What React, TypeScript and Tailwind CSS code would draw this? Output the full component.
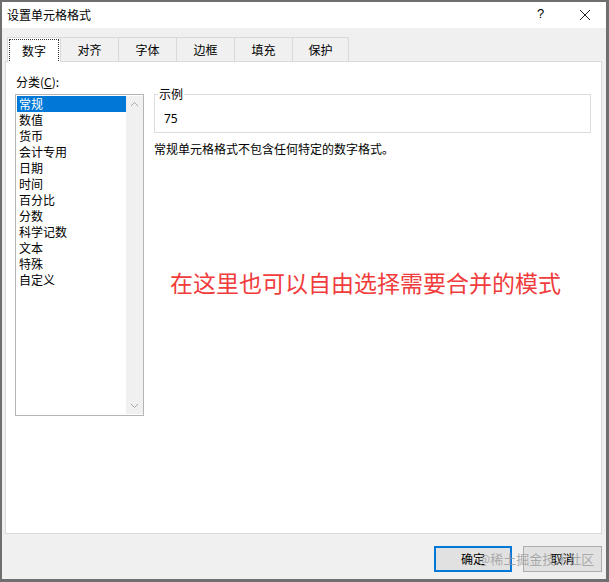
import React from "react";

const items = ["常规", "数值", "货币", "会计专用", "日期", "时间", "百分比", "分数", "科学记数", "文本", "特殊", "自定义"];
const tabs = [
  { t: "对齐", w: "w-[58px]" },
  { t: "字体", w: "w-[58px]" },
  { t: "边框", w: "w-[58px]" },
  { t: "填充", w: "w-[58px]" },
  { t: "保护", w: "w-[56px]" },
];

export default function App() {
  return (
    <div className="w-[609px] h-[582px] bg-[#6f6f6f] pl-[2px] pt-[2px] pr-[3px] pb-[3px] font-['Noto_Sans_CJK_SC','Microsoft_YaHei',sans-serif] text-[12px] text-black">
      <div className="flex flex-col h-full bg-[#f0f0f0]">
        {/* title bar */}
        <div className="h-[26px] bg-white flex items-center pl-[5px] relative shrink-0">
          <span className="leading-[16px]">设置单元格格式</span>
          <span className="absolute left-[535px] top-[4px] text-[13px] leading-[16px] font-['Liberation_Sans',sans-serif]">?</span>
          <svg className="absolute left-[577px] top-[7px]" width="12" height="12" viewBox="0 0 12 12">
            <path d="M1 1 L11 11 M11 1 L1 11" stroke="#222" strokeWidth="1" fill="none" />
          </svg>
        </div>
        {/* tabs */}
        <div className="flex pl-[5px] mt-[9px] h-[24px] shrink-0 relative z-10">
          <div className="w-[54px] h-[25px] bg-white border border-b-0 border-[#d9d9d9] p-[1px]">
            <div className="h-full border border-dotted border-[#333] border-b-0 flex items-center justify-center leading-[16px]">数字</div>
          </div>
          {tabs.map((x) => (
            <div key={x.t} className={`${x.w} h-[24px] bg-[#f0f0f0] border border-l-0 border-b-0 border-[#d9d9d9] flex items-center justify-center leading-[16px]`}>
              {x.t}
            </div>
          ))}
        </div>
        {/* panel */}
        <div className="ml-[3px] mr-[4px] flex-1 bg-white border border-[#d9d9d9] flex">
          <div className="pl-[9px] pt-[12px] w-[147px] shrink-0">
            <div className="leading-[16px] pl-[1px]">
              分类(<span className="underline">C</span>):
            </div>
            <div className="mt-[4px] w-[129px] h-[322px] border border-[#b5b5b5] flex p-[1px] pr-0">
              <div className="flex-1 flex flex-col">
                {items.map((it, i) => (
                  <div
                    key={it}
                    className={`h-[16px] leading-[16px] pl-[2px] ${i === 0 ? "bg-[#0078d7] text-white" : ""}`}
                  >
                    {it}
                  </div>
                ))}
              </div>
              <div className="w-[17px] bg-[#f0f0f0] flex flex-col justify-between items-center py-[5px]">
                <svg width="9" height="6" viewBox="0 0 9 6">
                  <path d="M1 5 L4.5 1.5 L8 5" stroke="#a6a6a6" strokeWidth="1" fill="none" />
                </svg>
                <svg width="9" height="6" viewBox="0 0 9 6">
                  <path d="M1 1 L4.5 4.5 L8 1" stroke="#a6a6a6" strokeWidth="1" fill="none" />
                </svg>
              </div>
            </div>
          </div>
          <div className="flex-1 pt-[32px] pl-[1px] pr-[10px]">
            <div className="relative h-[39px] border border-[#dcdcdc]">
              <span className="absolute left-[3px] top-[-9px] bg-white px-[1px] leading-[16px]">示例</span>
              <span className="absolute left-[9px] top-[16px] leading-[16px] font-['Noto_Sans',sans-serif] text-[12px]">75</span>
            </div>
            <div className="mt-[8px] leading-[16px]">常规单元格格式不包含任何特定的数字格式。</div>
            <div className="mt-[110px] ml-[16px] text-[23px] leading-[30px] text-[#f03c3c]">在这里也可以自由选择需要合并的模式</div>
          </div>
        </div>
        {/* buttons */}
        <div className="h-[45px] shrink-0 flex justify-end items-start pt-[12px] pr-[4px] gap-[11px] relative">
          <button className="w-[78px] h-[26px] bg-[#e1e1e1] border-2 border-[#0078d7] leading-[16px]">确定</button>
          <button className="w-[79px] h-[26px] bg-[#e1e1e1] border border-[#adadad] leading-[16px]">取消</button>
          <span className="absolute left-[476px] top-[16px] text-[13px] leading-[18px] text-[#9a9a9a]/80 pointer-events-none">@稀土掘金技术社区</span>
        </div>
      </div>
    </div>
  );
}
